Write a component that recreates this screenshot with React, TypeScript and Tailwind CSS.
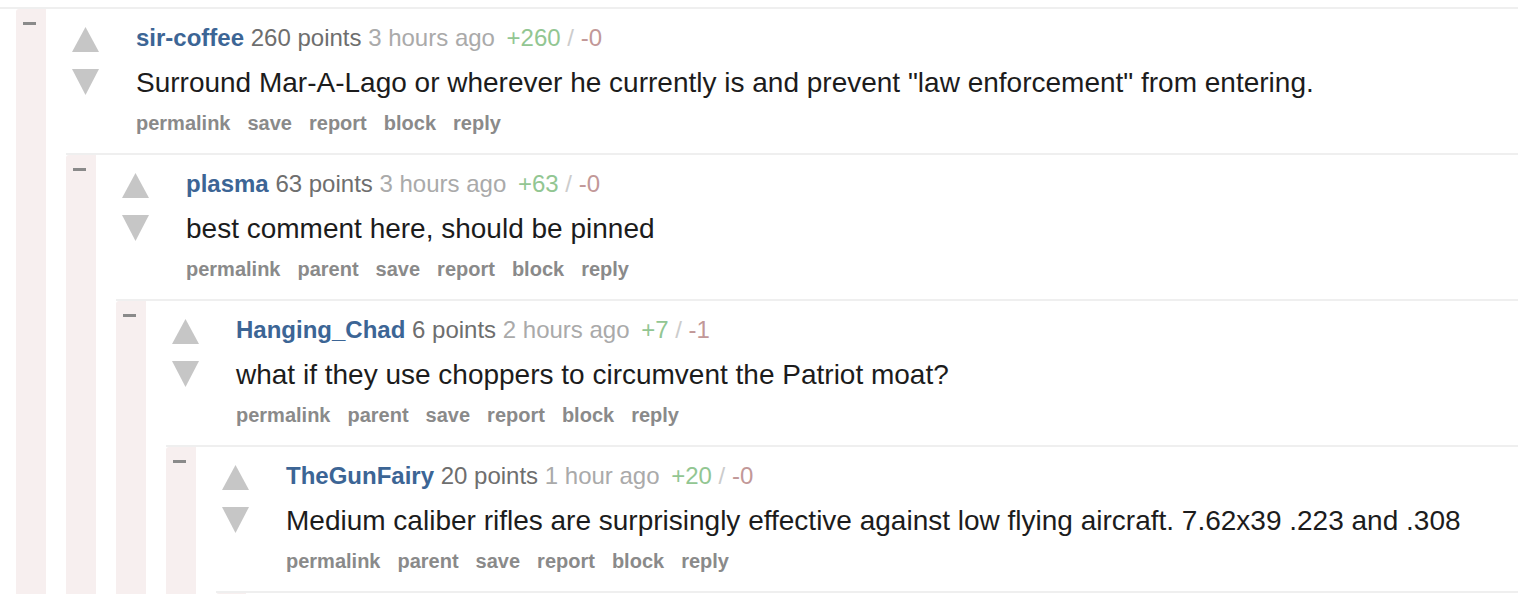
import * as React from "react";

type CommentData = {
  user: string;
  points: number;
  age: string;
  up: number;
  down: number;
  body: string;
  parent?: boolean;
  children?: CommentData[];
  stub?: boolean;
};

const thread: CommentData = {
  user: "sir-coffee",
  points: 260,
  age: "3 hours ago",
  up: 260,
  down: 0,
  body: 'Surround Mar-A-Lago or wherever he currently is and prevent "law enforcement" from entering.',
  children: [
    {
      user: "plasma",
      points: 63,
      age: "3 hours ago",
      up: 63,
      down: 0,
      parent: true,
      body: "best comment here, should be pinned",
      children: [
        {
          user: "Hanging_Chad",
          points: 6,
          age: "2 hours ago",
          up: 7,
          down: 1,
          parent: true,
          body: "what if they use choppers to circumvent the Patriot moat?",
          children: [
            {
              user: "TheGunFairy",
              points: 20,
              age: "1 hour ago",
              up: 20,
              down: 0,
              parent: true,
              body: "Medium caliber rifles are surprisingly effective against low flying aircraft. 7.62x39 .223 and .308",
              children: [
                {
                  user: "",
                  points: 0,
                  age: "",
                  up: 0,
                  down: 0,
                  body: "",
                  stub: true,
                },
              ],
            },
          ],
        },
      ],
    },
  ],
};

function Arrow({ dir }: { dir: "up" | "down" }) {
  return (
    <svg width="27" height="26" viewBox="0 0 27 26" className="block">
      {dir === "up" ? (
        <polygon points="13.5,0 27,25 0,25" fill="#c6c6c6" />
      ) : (
        <polygon points="0,0 27,0 13.5,26" fill="#c6c6c6" />
      )}
    </svg>
  );
}

function Comment({ c, nested }: { c: CommentData; nested?: boolean }) {
  const actions = ["permalink", ...(c.parent ? ["parent"] : []), "save", "report", "block", "reply"];

  return (
    <div className={nested ? "border-t-2 border-[#efefef]" : ""}>
      <div className="flex">
        <div className="w-[30px] shrink-0 bg-[#f7efef] rounded-tl-[3px] pt-[13px] pl-[7px]">
          <div className="w-[13px] h-[3px] bg-[#8a8a8a]" />
        </div>
        <div className="flex-1 min-w-0">
          {c.stub ? (
            <div className="h-[140px]" />
          ) : (
            <div className="flex pl-[26px] pt-[15px] pb-[18px]">
              <div className="w-[27px] shrink-0 mr-[37px] pt-[3px] flex flex-col gap-[16px]">
                <Arrow dir="up" />
                <Arrow dir="down" />
              </div>
              <div className="flex flex-col">
                <div className="text-[24px] leading-[28px] whitespace-nowrap">
                  <span className="font-bold text-[#3c6595]">{c.user}</span>{" "}
                  <span className="text-[#6e6e6e]">{c.points} points</span>{" "}
                  <span className="text-[#aaaaaa]">{c.age}</span>
                  <span className="ml-[5px] text-[#92c692]"> +{c.up}</span>
                  <span className="text-[#cccccc]"> / </span>
                  <span className="text-[#c29898]">-{c.down}</span>
                </div>
                <div className="mt-[14px] text-[28px] leading-[34px] text-[#1c1c1c] whitespace-nowrap">
                  {c.body}
                </div>
                <div className="mt-[11px] flex gap-[17px] text-[20px] leading-[24px] font-bold text-[#8a8a8a]">
                  {actions.map((a) => (
                    <span key={a}>{a}</span>
                  ))}
                </div>
              </div>
            </div>
          )}
          {c.children && (
            <div className="ml-[20px]">
              {c.children.map((ch, i) => (
                <Comment key={i} c={ch} nested />
              ))}
            </div>
          )}
        </div>
      </div>
    </div>
  );
}

export default function App() {
  return (
    <div
      className="w-full h-[594px] overflow-hidden bg-white"
      style={{ fontFamily: '"Liberation Sans", Arial, sans-serif' }}
    >
      <div className="mt-[7px] border-t-2 border-[#efefef] pl-[16px]">
        <Comment c={thread} />
      </div>
    </div>
  );
}
